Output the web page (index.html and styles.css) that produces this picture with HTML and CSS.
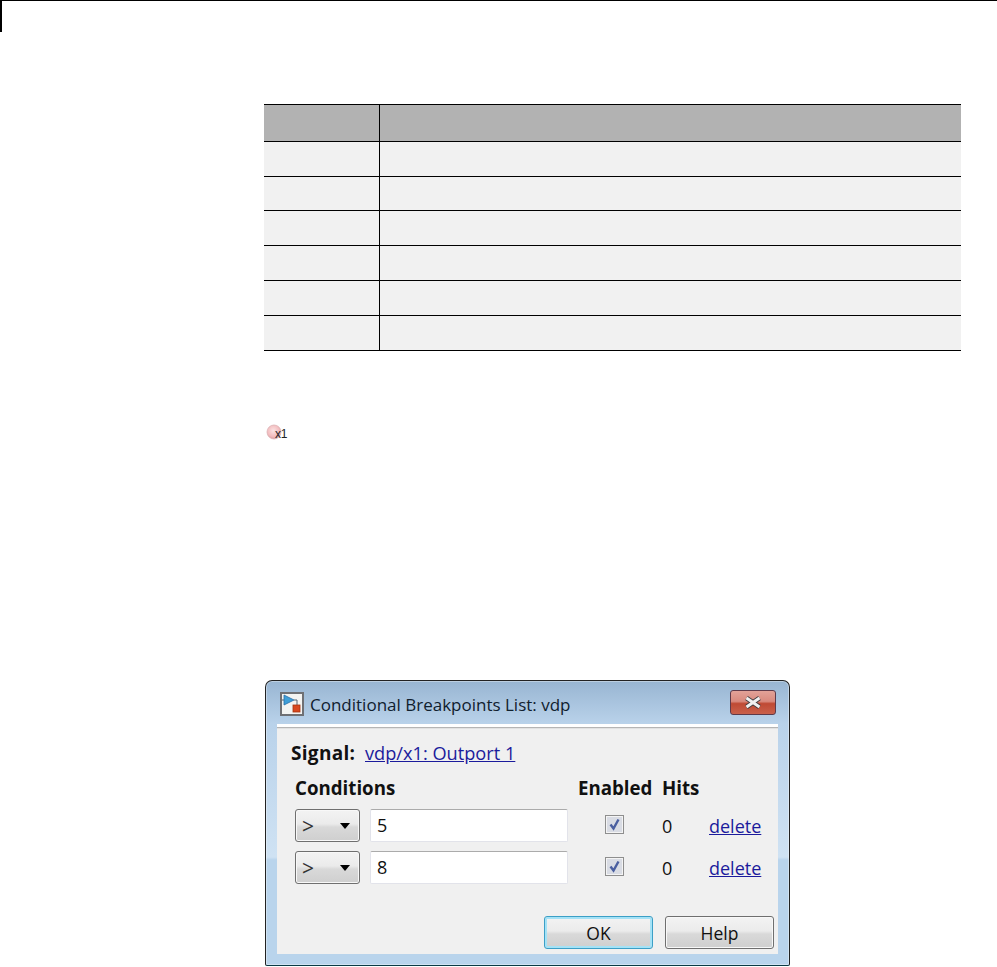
FILE: index.html
```html
<!DOCTYPE html>
<html lang="en">
<head>
  <meta charset="UTF-8" />
  <title>Conditional Breakpoints</title>
  <link rel="stylesheet" href="styles.css">
</head>
<body>

  <div class="top-rule"><div class="top-tick"></div></div>

  <table class="data-table">
    <tr class="head"><th class="col-a"></th><th></th></tr>
    <tr class="r35"><td></td><td></td></tr>
    <tr class="r34"><td></td><td></td></tr>
    <tr class="r35"><td></td><td></td></tr>
    <tr class="r35"><td></td><td></td></tr>
    <tr class="r35"><td></td><td></td></tr>
    <tr class="r35"><td></td><td></td></tr>
  </table>

  <div class="bp-badge">
    <svg width="24" height="20" viewBox="0 0 24 20">
      <defs>
        <radialGradient id="ball" cx="45%" cy="40%" r="60%">
          <stop offset="0" stop-color="#fbe3e3"/>
          <stop offset="0.7" stop-color="#f3bcbe"/>
          <stop offset="1" stop-color="#d99a9e"/>
        </radialGradient>
      </defs>
      <circle cx="9" cy="9" r="7" fill="url(#ball)" stroke="#dcb4b6" stroke-width="0.8"/>
    </svg>
    <span class="bp-label">x1</span>
  </div>

  <div class="dialog">
    <div class="titlebar">
      <svg class="app-icon" width="24" height="24" viewBox="0 0 24 24">
        <rect x="1" y="1" width="22" height="22" fill="#f4f4f2" stroke="#6f7074" stroke-width="2"/>
        <path d="M2 8 H4 M14 8 H17 V13" fill="none" stroke="#55626e" stroke-width="1"/>
        <path d="M4 3 V13 L14 8 Z" fill="#3f9fd8" stroke="#2a6fa8" stroke-width="0.8"/>
        <rect x="13" y="13" width="7" height="7" fill="#d9481f" stroke="#a5340f" stroke-width="0.8"/>
      </svg>
      <span class="title">Conditional Breakpoints List: vdp</span>
      <div class="close-btn">
        <svg width="20" height="13" viewBox="0 0 20 13">
          <path d="M3.5 2 L16.5 11 M16.5 2 L3.5 11" stroke="#3b3b3f" stroke-width="4.6"/>
          <path d="M3.5 2 L16.5 11 M16.5 2 L3.5 11" stroke="#f1f1f1" stroke-width="3"/>
        </svg>
      </div>
    </div>

    <div class="client">
      <div class="signal-row">
        <b>Signal:</b>
        <a href="#">vdp/x1: Outport 1</a>
      </div>

      <div class="cond-grid">
        <div class="lbl">Conditions</div>
        <div class="lbl">Enabled</div>
        <div class="lbl">Hits</div>
        <div></div>

        <div class="cond-left">
          <div class="combo"><span>&gt;</span><i class="caret"></i></div>
          <div class="text-input">5</div>
        </div>
        <div class="check"><svg width="13" height="13" viewBox="0 0 13 13"><path d="M2.5 6.5 L5.5 10.5 L10.5 1.5" fill="none" stroke="#4a5fa0" stroke-width="2.4"/></svg></div>
        <div class="hits">0</div>
        <a class="del" href="#">delete</a>

        <div class="cond-left">
          <div class="combo"><span>&gt;</span><i class="caret"></i></div>
          <div class="text-input">8</div>
        </div>
        <div class="check"><svg width="13" height="13" viewBox="0 0 13 13"><path d="M2.5 6.5 L5.5 10.5 L10.5 1.5" fill="none" stroke="#4a5fa0" stroke-width="2.4"/></svg></div>
        <div class="hits">0</div>
        <a class="del" href="#">delete</a>
      </div>

      <div class="btn-row">
        <div class="btn btn-ok">OK</div>
        <div class="btn">Help</div>
      </div>
    </div>
  </div>

</body>
</html>
```

FILE: styles.css
```css
* {
  box-sizing: border-box;
}

html, body {
  height: 967px;
  overflow: hidden;
}

body {
  margin: 0;
  background: #fff;
  font-family: 'Open Sans', 'Noto Sans', sans-serif;
  color: #111;
}

.top-rule {
  height: 104px;
  border-top: 1px solid #000;
}

.top-tick {
  width: 2px;
  height: 31px;
  background: #000;
}

.data-table {
  margin-left: 264px;
  width: 697px;
  border-collapse: collapse;
  table-layout: fixed;
  border-top: 1px solid #000;
  border-bottom: 1px solid #000;
}

.data-table th, .data-table td {
  padding: 0;
  border-bottom: 1px solid #000;
}

.data-table th:first-child, .data-table td:first-child {
  border-right: 1px solid #000;
}

.data-table th {
  background: #b2b2b2;
}

.data-table td {
  background: #f1f1f1;
}

.col-a {
  width: 115px;
}

.head {
  height: 37px;
}

.r35 {
  height: 35px;
}

.r34 {
  height: 34px;
}

.bp-badge {
  position: relative;
  margin: 72px 0 0 265px;
  width: 24px;
  height: 20px;
}

.bp-label {
  position: absolute;
  left: 10px;
  top: 5px;
  font: 12px/12px 'Liberation Sans', sans-serif;
  letter-spacing: -0.3px;
  color: #222;
}

.dialog {
  margin: 237px 0 0 265px;
  width: 525px;
  height: 286px;
  border: 1px solid #222;
  border-bottom-color: #0b3a44;
  border-radius: 7px 7px 2px 2px;
  background: linear-gradient(to bottom, #98b5d2 0%, #b9d2ea 15%, #cfe2f3 62%, #b9d4ec 63%, #b9d4ec 100%);
  padding: 0 11px 11px;
  display: flex;
  flex-direction: column;
  box-shadow: inset 0 0 0 1px rgba(255, 255, 255, 0.35);
}

.titlebar {
  height: 43px;
  display: flex;
  align-items: center;
  padding: 3px 0 0 3px;
}

.app-icon {
  flex: none;
}

.title {
  margin-left: 6px;
  font-size: 17px;
  line-height: 24px;
  padding-top: 2px;
  color: #10202e;
  flex: 1;
}

.close-btn {
  width: 46px;
  height: 25px;
  margin: 0 2px 3px 0;
  border: 1px solid #5d3a4a;
  border-radius: 3px;
  background: linear-gradient(to bottom, #e2a298 0%, #d98a7e 45%, #bf4a34 55%, #c9614c 100%);
  display: flex;
  align-items: center;
  justify-content: center;
}

.client {
  flex: 1;
  background: #f0f0f0;
  border-top: 3px solid #fff;
  padding: 0 4px 5px 14px;
  display: flex;
  flex-direction: column;
  box-shadow: inset 0 1px 0 #b5b5b5, inset 0 2px 0 #e2e2e2;
}

.signal-row {
  margin-top: 14px;
  height: 24px;
  line-height: 24px;
  font-size: 18.2px;
  display: flex;
  gap: 8px;
}

.signal-row b {
  font-size: 19px;
  width: 66px;
  white-space: nowrap;
  letter-spacing: 0.3px;
}

.signal-row a, .del {
  color: #1b1b9c;
  text-decoration: underline;
}

.cond-grid {
  margin-top: 11px;
  margin-left: 4px;
  display: grid;
  grid-template-columns: 283px 84px 47px 1fr;
  grid-template-rows: 33px 42px 33px;
  align-items: center;
  font-size: 18px;
}

.lbl {
  font-weight: 700;
  font-size: 18.7px;
  line-height: 24px;
  align-self: start;
  white-space: nowrap;
}

.cond-left {
  display: flex;
  gap: 10px;
  align-self: start;
}

.combo {
  width: 65px;
  height: 33px;
  border: 1px solid #6f6f6f;
  border-radius: 3px;
  background: linear-gradient(to bottom, #f3f3f3 0%, #ebebeb 45%, #d9d9d9 55%, #cfcfcf 100%);
  box-shadow: inset 0 0 0 1px #f8f8f8;
  display: flex;
  align-items: center;
  justify-content: space-between;
  padding: 0 9px 0 6px;
  font-size: 21px;
  color: #333;
}

.caret {
  width: 0;
  height: 0;
  border-left: 5px solid transparent;
  border-right: 5px solid transparent;
  border-top: 6px solid #000;
}

.text-input {
  width: 198px;
  height: 33px;
  background: #fff;
  border: 1px solid #e2e3ea;
  border-top-color: #ababab;
  border-radius: 2px;
  padding-left: 6px;
  line-height: 31px;
  font-size: 18px;
}

.check {
  margin-left: 27px;
  width: 19px;
  height: 19px;
  border: 1px solid #8e8e8e;
  background: #d9dce4;
  box-shadow: inset 0 0 0 1px #f4f4f4;
  display: flex;
  align-items: center;
  justify-content: center;
  align-self: start;
  margin-top: 6px;
}

.hits, .del {
  align-self: start;
  line-height: 35px;
}

.btn-row {
  margin-top: auto;
  display: flex;
  justify-content: flex-end;
  gap: 12px;
}

.btn {
  width: 109px;
  height: 33px;
  border: 1px solid #6f6f6f;
  border-radius: 3px;
  background: linear-gradient(to bottom, #f3f3f3 0%, #ebebeb 45%, #d9d9d9 55%, #cfcfcf 100%);
  box-shadow: inset 0 0 0 1px #f8f8f8;
  text-align: center;
  line-height: 33px;
  font-size: 17.5px;
}

.btn-ok {
  border-color: #3c9fc6;
  box-shadow: inset 0 0 0 2px #a5e2f6;
}
```
